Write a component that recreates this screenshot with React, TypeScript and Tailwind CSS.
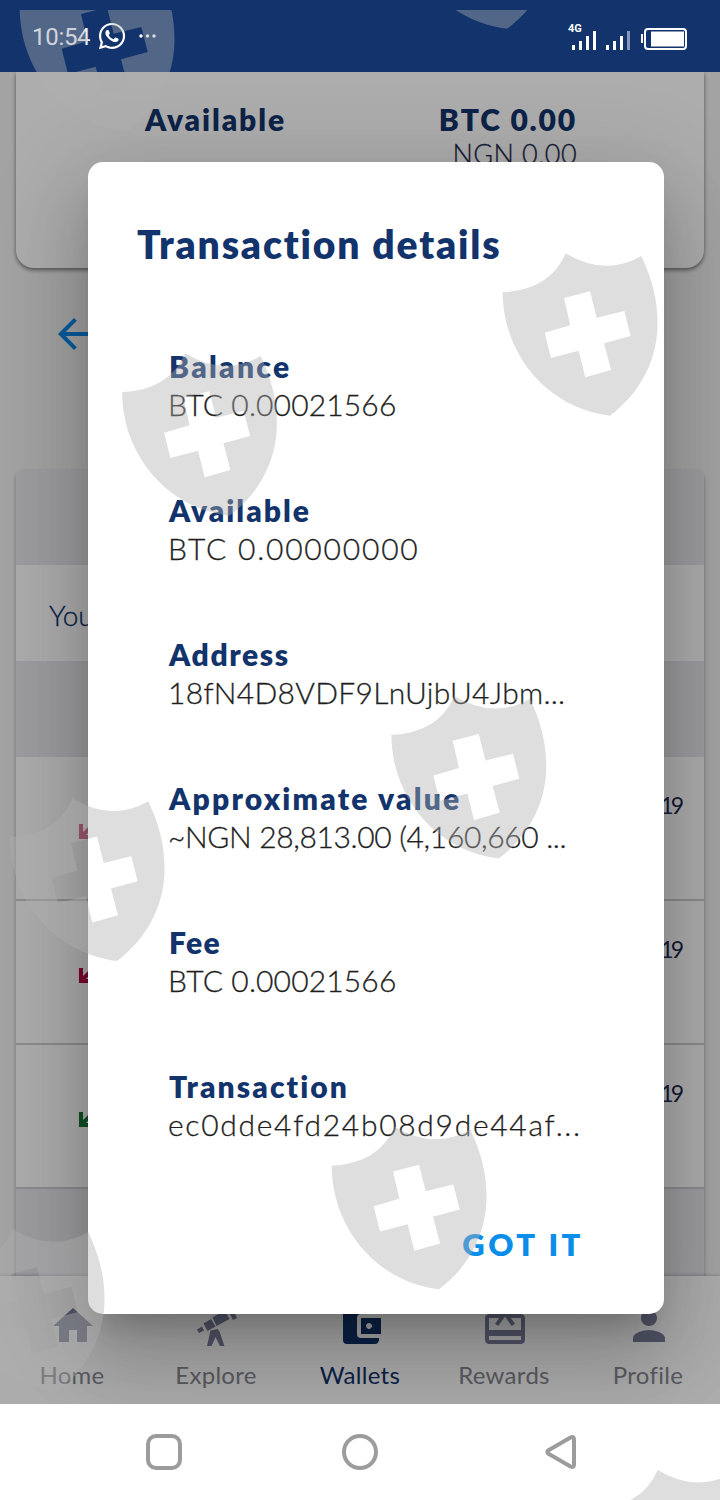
import type { ReactNode } from "react";
import { FaWhatsapp } from "react-icons/fa";
import {
  MdAccountBalanceWallet,
  MdArrowBack,
  MdCardGiftcard,
  MdHome,
  MdPerson,
} from "react-icons/md";

const details = [
  { label: "Balance", value: "BTC 0.00021566", labelClass: "tracking-[2.3px]", valueClass: "tracking-[0.15px]" },
  { label: "Available", value: "BTC 0.00000000", labelClass: "tracking-[2px]", valueClass: "tracking-[1.8px]" },
  { label: "Address", value: "18fN4D8VDF9LnUjbU4Jbm...", labelClass: "tracking-[1.6px]", valueClass: "tracking-[0.3px]" },
  { label: "Approximate value", value: "~NGN 28,813.00 (4,160,660 ...", labelClass: "tracking-[2.2px]", valueClass: "tracking-[-0.35px]" },
  { label: "Fee", value: "BTC 0.00021566", labelClass: "tracking-[1.3px]", valueClass: "tracking-[0.15px]" },
  { label: "Transaction", value: "ec0dde4fd24b08d9de44af...", labelClass: "tracking-[2.1px]", valueClass: "tracking-[1.7px]" },
];

const shields = [
  [19, -32],
  [399.2, -135],
  [502, 252],
  [121.4, 352],
  [390.7, 694.7],
  [9, 797.3],
  [331, 1125.5],
  [-51, 1228],
  [594, 1468.7],
];

const StatusBar = () => (
  <header className="flex h-[72px] shrink-0 items-center justify-between bg-[#12336b] pl-8 pr-[33px] text-[#e6eefa]">
    <div className="flex items-center">
      <span className="mt-[2px] w-[65px] whitespace-nowrap font-[Roboto] text-[24px] leading-none tracking-[-0.3px]">
        10:54
      </span>
      <FaWhatsapp className="size-[30px] text-white" />
      <svg className="ml-[11px] h-2 w-5" viewBox="0 0 20 8" fill="#fff">
        <circle cx="3" cy="4" r="1.7" />
        <circle cx="9.500" cy="4" r="1.7" />
        <circle cx="16" cy="4" r="1.7" />
      </svg>
    </div>
    <div className="flex items-center">
      <div className="w-[34px]">
        <div className="mt-[1px] h-[7px] font-[Roboto] text-[11px] font-bold leading-[9px] text-white">4G</div>
        <svg className="h-[19px] w-[30px]" viewBox="0 0 30 19" fill="#fff">
          <path d="M4 14h3v5H4zM11 10h3v9h-3zM18 5h3v14h-3zM25 0h3v19h-3z" />
        </svg>
      </div>
      <svg className="mt-[8px] h-[19px] w-[30px]" viewBox="0 0 30 19" fill="#fff">
        <path d="M4 14h3v5H4zM11 10h3v9h-3zM18 5h3v14h-3z" />
        <path d="M25 0h3v19h-3z" opacity=".5" />
      </svg>
      <svg className="ml-[8px] mt-[5px] h-[22px] w-[47px]" viewBox="0 0 47 22">
        <path d="M1 6h2v9H1z" fill="#fff" />
        <rect x="5" y="1" width="41" height="20" rx="3" fill="none" stroke="#fff" strokeWidth="2" />
        <path d="M11 3.500h33v15H11z" fill="#fff" />
      </svg>
    </div>
  </header>
);

const DirectionIcon = ({ className }: { className: string }) => (
  <svg className={`size-[18px] ${className}`} viewBox="0 0 18 18" fill="none" stroke="currentColor" strokeWidth="4">
    <path d="M2 0v13h14M2.500 12.500 14 1" />
  </svg>
);

const Row = ({ iconClass }: { iconClass: string }) => (
  <div className="flex h-[144px] justify-between border-b-2 border-[#cfcfcf] bg-white pl-[63px] pr-[23px]">
    <DirectionIcon className={`mt-[67px] ${iconClass}`} />
    <span className="mt-[33px] text-[23px] leading-[30px] tracking-[-3px] text-[#1f2c4d]">2019</span>
  </div>
);

const TelescopeIcon = () => (
  <svg className="size-12" viewBox="0 0 48 48" fill="currentColor">
    <path d="M4 27.500l5-3 2 4-5 2.500zM10.500 21.500l7.500-4.500 4.500 7.500-8 4.500zM19.500 15.500l12-7.500 5 9-13 7zM34 6l4-2 6 12-4 2z" />
    <path d="M17.500 28.500l7-1.500 2 2.500 5 14.500h-4.500l-4.500-9-4 9H14z" />
  </svg>
);

const Tab = ({ label, active, children }: { label: string; active?: boolean; children: ReactNode }) => (
  <div className={`flex w-[144px] flex-col items-center pt-[26px] ${active ? "text-[#12336b]" : "text-[#7b7f9b]"}`}>
    <div className="pl-[2px]">{children}</div>
    <span className={`mt-[9px] text-[24px] leading-[32px] tracking-[0.3px] ${active ? "" : "text-[#85868e]"}`}>{label}</span>
  </div>
);

const Wallet = () => (
  <div className="flex h-full flex-col bg-[#f1f1f1]">
    <section className="mx-4 flex h-[196px] shrink-0 justify-between rounded-b-[18px] bg-white pl-[129px] pr-[127px] pt-7 shadow-[0_2px_4px_rgba(0,0,0,0.5)]">
      <span className="text-[30px] font-extrabold leading-[38px] tracking-[1.9px] text-[#12336b]">Available</span>
      <div className="text-right">
        <div className="text-[30px] font-extrabold leading-[38px] tracking-[1.8px] text-[#12336b]">BTC 0.00</div>
        <div className="mt-[-1px] text-[27px] font-light leading-[34px] tracking-[0.4px] text-[#1f2c4d] [-webkit-text-stroke:0.3px]">
          NGN 0.00
        </div>
      </div>
    </section>
    <div className="flex h-[202px] shrink-0 pl-[50px] pt-[42px] text-[#0a88e8]">
      <MdArrowBack className="size-12" />
    </div>
    <section className="mx-4 flex-1 overflow-hidden rounded-t-lg bg-white shadow-[0_2px_4px_rgba(0,0,0,0.3)]">
      <div className="h-[95px] bg-[#e7e7ec]" />
      <div className="flex h-24 items-center bg-white pl-[33px] pt-[3px] text-[28px] font-light text-[#12336b] [-webkit-text-stroke:0.3px]">
        Your transactions
      </div>
      <div className="h-24 bg-[#e7e7ec]" />
      <Row iconClass="text-[#b80a45]" />
      <Row iconClass="text-[#b80a45]" />
      <Row iconClass="text-[#1d7a3c]" />
      <div className="h-24 bg-[#e7e7ec]" />
    </section>
    <nav className="flex h-32 shrink-0 bg-[#fefefe] shadow-[0_-1px_3px_rgba(0,0,0,0.2)]">
      <Tab label="Home"><MdHome className="size-12" /></Tab>
      <Tab label="Explore"><TelescopeIcon /></Tab>
      <Tab label="Wallets" active><MdAccountBalanceWallet className="size-12" /></Tab>
      <Tab label="Rewards"><MdCardGiftcard className="size-12" /></Tab>
      <Tab label="Profile"><MdPerson className="size-12" /></Tab>
    </nav>
  </div>
);

const DetailsDialog = () => (
  <div
    role="dialog"
    className="absolute left-[88px] top-[90px] flex h-[1152px] w-[576px] flex-col rounded-[15px] bg-white px-[49px] pt-[56px] shadow-[0_22px_30px_-14px_rgba(0,0,0,0.2),0_48px_76px_6px_rgba(0,0,0,0.14),0_18px_92px_16px_rgba(0,0,0,0.12)]"
  >
    <h2 className="whitespace-nowrap text-[39px] font-extrabold leading-[52px] tracking-[1.85px] text-[#12336b]">
      Transaction details
    </h2>
    <dl className="mt-[77px] flex flex-col gap-[68px] pl-[31px]">
      {details.map((item) => (
        <div key={item.label} className="whitespace-nowrap">
          <dt className={`pl-px text-[30px] font-extrabold leading-[38px] text-[#12336b] ${item.labelClass}`}>{item.label}</dt>
          <dd className={`text-[30px] font-light leading-[38px] text-[#1e1e1e] [-webkit-text-stroke:0.3px] ${item.valueClass}`}>
            {item.value}
          </dd>
        </div>
      ))}
    </dl>
    <button className="mr-[31px] mt-[81px] self-end text-[31px] font-extrabold leading-[40px] tracking-[3.5px] text-[#0a8eea]">
      GOT IT
    </button>
  </div>
);

const NavigationBar = () => (
  <footer className="flex h-24 shrink-0 items-center bg-white pl-[146px] text-[#9c9c9c]">
    <div className="size-9 rounded-[10px] border-4 border-current" />
    <div className="ml-[160px] size-9 rounded-full border-4 border-current" />
    <svg className="ml-[166px] h-9 w-[34px]" viewBox="0 0 34 36" fill="none" stroke="currentColor" strokeWidth="4" strokeLinejoin="round">
      <path d="M4.500 16.200 26.500 3.500q3.500-1.500 3.500 2v25q0 3.500-3.500 2L4.500 19.800q-2.500-1.800 0-3.600z" />
    </svg>
  </footer>
);

const Shields = () => (
  <div className="pointer-events-none absolute inset-x-0 bottom-0 top-[10px] overflow-hidden">
    <svg className="h-full w-full" viewBox="0 10 720 1490" fill="#b0b0b0" fillOpacity=".41" fillRule="evenodd">
      {shields.map(([x, y]) => (
        <path
          key={`${x}-${y}`}
          transform={`translate(${x} ${y})`}
          d="M.7 40.300Q48 38 63.700 1.300 103 25 139.300 4C150 27 155.500 47 155.500 72 155.500 110 136 143 108 163.700 48 157 1 105 .7 40.300zM62 46l6.300 27.300-25.600 7.400L49 106l27.700-7.300 6.600 26.600L109 118l-7-26.700 26.700-7.300-6.400-25-27.600 6.700L88 39.300z"
        />
      ))}
    </svg>
  </div>
);

const App = () => (
  <div className="relative flex h-[1500px] w-[720px] flex-col overflow-hidden bg-white font-[Lato,sans-serif]">
    <StatusBar />
    <main className="relative h-[1332px] shrink-0 overflow-hidden">
      <Wallet />
      <div className="absolute inset-0 bg-black/32" />
      <DetailsDialog />
    </main>
    <NavigationBar />
    <Shields />
  </div>
);

export default App;
